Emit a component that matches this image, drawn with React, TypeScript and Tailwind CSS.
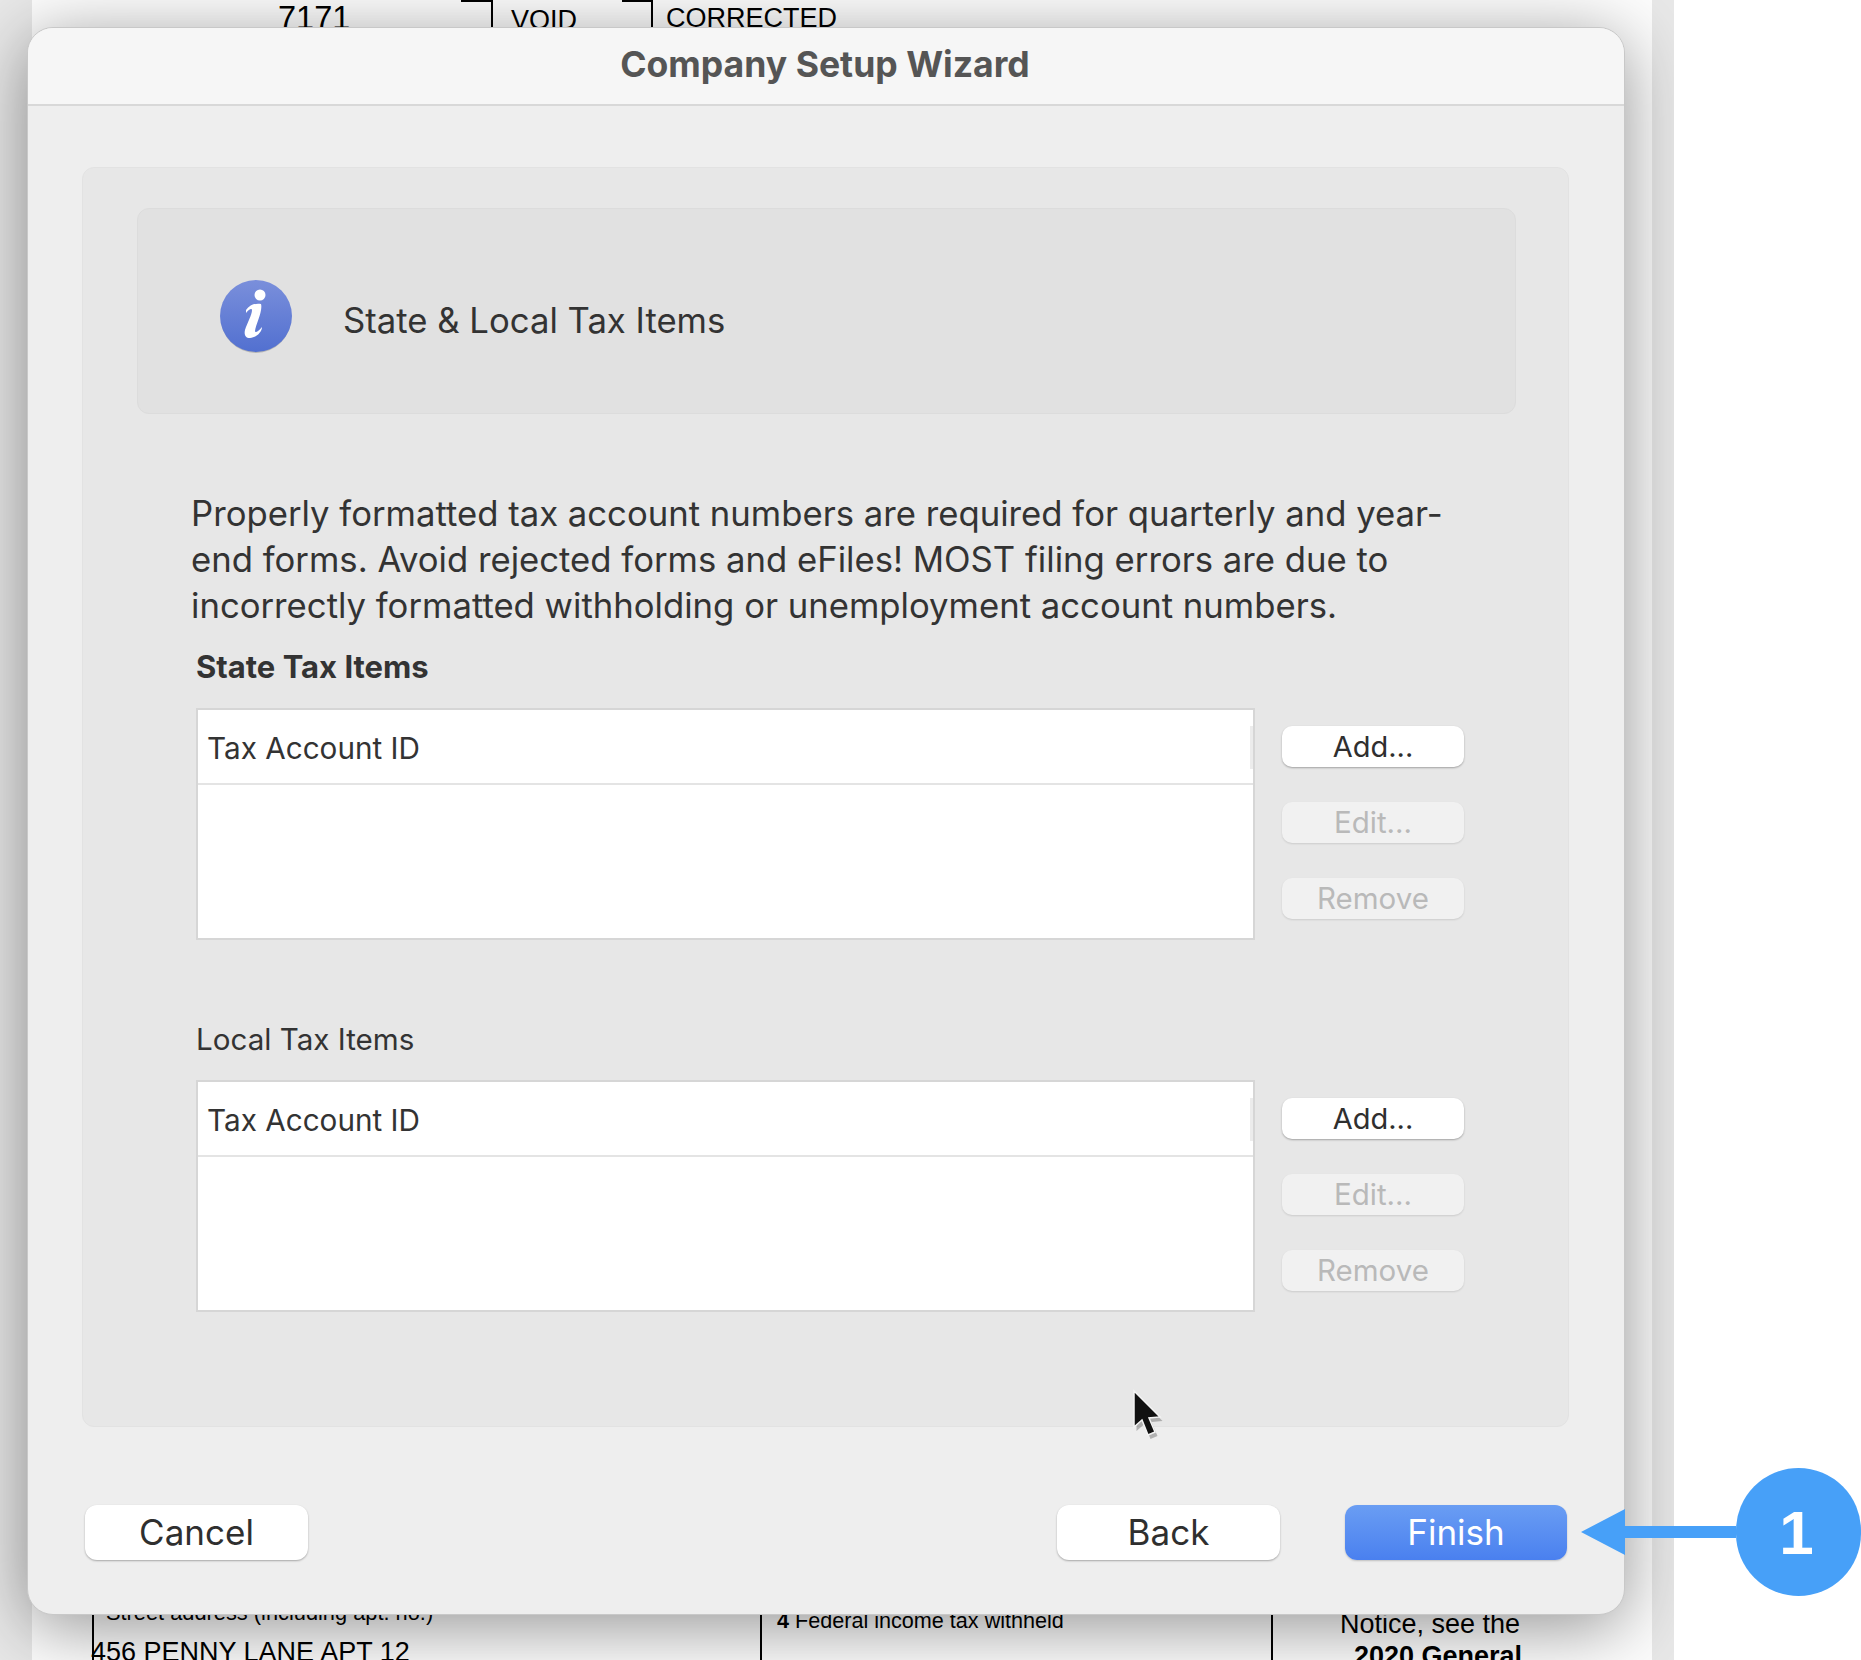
const sans = "font-['Inter','Noto_Sans',sans-serif]";

function SideButton({ label, disabled }: { label: string; disabled?: boolean }) {
  return (
    <button
      className={
        disabled
          ? "h-[41px] w-[182px] rounded-[10px] bg-[#f1f1f1] text-[29.5px] leading-none text-[#b9b9b9] shadow-[0_1px_2px_rgba(0,0,0,0.12)]"
          : "h-[41px] w-[182px] rounded-[10px] bg-white text-[29px] leading-none text-[#2f2f2f] shadow-[0_1px_2px_rgba(0,0,0,0.3)]"
      }
    >
      {label}
    </button>
  );
}

function TaxSection({ title, bold }: { title: string; bold?: boolean }) {
  return (
    <section>
      <h3 className={bold ? "-mt-[1px] h-[58px] text-[31px] leading-[34px] font-bold text-[#333]" : "-mt-[1px] h-[58px] text-[29.6px] leading-[34px] text-[#333]"}>
        {title}
      </h3>
      <div className="flex items-start">
        <div className="h-[232px] w-[1059px] border-[2px] border-[#d6d6d6] bg-white">
          <div className="relative flex h-[75px] items-center border-b-[2px] border-[#e4e4e4] pt-[4px] pl-[9px] text-[29.7px] text-[#333]">
            Tax Account ID
            <span className="absolute top-[16px] right-0 h-[43px] w-[3px] bg-[#ececec]" />
          </div>
        </div>
        <div className="mt-[18px] ml-[27px] flex flex-col gap-[35px]">
          <SideButton label="Add..." />
          <SideButton label="Edit..." disabled />
          <SideButton label="Remove" disabled />
        </div>
      </div>
    </section>
  );
}

function DialogButton({ label, primary }: { label: string; primary?: boolean }) {
  return (
    <button
      className={
        primary
          ? "h-[55px] w-[222px] rounded-[12px] bg-linear-to-b from-[#6a9df3] to-[#4a80ef] text-[35px] leading-none text-white shadow-[0_1px_2px_rgba(0,0,0,0.2)]"
          : "h-[55px] w-[223px] rounded-[12px] bg-white text-[35px] leading-none text-[#2f2f2f] shadow-[0_1px_2px_rgba(0,0,0,0.3)]"
      }
    >
      {label}
    </button>
  );
}

function InfoIcon() {
  return (
    <svg width="74" height="76" viewBox="0 0 74 76" className="mt-[10px] shrink-0">
      <defs>
        <linearGradient id="infoFill" x1="0" y1="0" x2="0" y2="1">
          <stop offset="0" stopColor="#7a8fdb" />
          <stop offset="1" stopColor="#5270d0" />
        </linearGradient>
      </defs>
      <ellipse cx="37" cy="40" rx="35" ry="35" fill="#000" opacity="0.2" />
      <ellipse cx="37" cy="38" rx="36" ry="36" fill="url(#infoFill)" />
      <circle cx="41" cy="17" r="5.5" fill="#fff" />
      <path
        d="M27 32 C31 26 38 25 42 26 C44 33 37 46 36 53 C36 55 39 54 43 49 C43 54 37 60 31 60 C26 60 25 56 26 52 C28 45 33 37 33 32 C33 30 30 31 27 35 Z"
        fill="#fff"
      />
    </svg>
  );
}

// the form lying behind the dialog: only its top and bottom edges show
function BackgroundForm() {
  return (
    <div className="ml-[32px] flex h-[1660px] w-[1620px] flex-col justify-between bg-[#fdfdfd] font-['Liberation_Sans',sans-serif] text-black">
      <div className="flex items-start pl-[246px] whitespace-nowrap">
        <span className="w-[183px] text-[32.5px] leading-[36px]">7171</span>
        <span className="h-[28px] w-[32px] border-t-[2px] border-r-[2px] border-black" />
        <span className="mt-[2px] ml-[18px] w-[111px] text-[27px] leading-[36px]">VOID</span>
        <span className="h-[28px] w-[31px] border-t-[2px] border-r-[2px] border-black" />
        <span className="ml-[13px] text-[27px] leading-[36px]">CORRECTED</span>
      </div>

      <div className="flex h-[62px] pl-[60px] whitespace-nowrap">
        <div className="flex w-[668px] flex-col border-l-[2px] border-black pt-[2px]">
          <span className="ml-[12px] text-[21.8px] leading-[26px]">Street address (including apt. no.)</span>
          <span className="mt-[9px] -ml-[3px] text-[27px] leading-[34px]">456 PENNY LANE APT 12</span>
        </div>
        <div className="w-[511px] border-l-[2px] border-black pt-[10px] pl-[15px] text-[21.6px] leading-[26px]">
          <b>4</b> Federal income tax withheld
        </div>
        <div className="flex flex-1 flex-col border-l-[2px] border-black pt-[10px] text-[27px] leading-[32px]">
          <span className="ml-[67px]">Notice, see the</span>
          <b className="ml-[81px]">2020 General</b>
        </div>
      </div>
    </div>
  );
}

export default function App() {
  return (
    <div className="relative h-[1660px] w-[1861px] overflow-hidden bg-white">
      {/* window behind the dialog, clipped so the shadow stops at its edge */}
      <div className="relative h-[1660px] w-[1674px] overflow-hidden bg-[#e8e8e8]">
        <BackgroundForm />

        <div className={`absolute top-[27px] left-[27px] h-[1588px] w-[1598px] overflow-hidden rounded-[26px] border border-[#c8c8c8] bg-[#eeeeee] shadow-[0_12px_70px_rgba(0,0,0,0.42)] ${sans}`}>
          <header className="flex h-[78px] items-center justify-center border-b-[2px] border-[#d8d8d8] bg-[#f6f6f6] pr-[2px] pb-[2px] text-[35.6px] font-bold text-[#555]">
            Company Setup Wizard
          </header>

          <div className="mt-[61px] mr-[55px] ml-[54px] h-[1260px] rounded-[12px] border border-[#e2e2e2] bg-[#e7e7e7] pt-[40px]">
            <div className="mr-[52px] ml-[54px] flex h-[206px] items-center rounded-[12px] border border-[#dcdcdc] bg-[#e1e1e1] pl-[81px]">
              <InfoIcon />
              <span className="mt-[18px] ml-[50px] text-[34.7px] text-[#333]">State &amp; Local Tax Items</span>
            </div>

            <p className="mt-[76px] ml-[108px] w-[1300px] text-[34.7px] leading-[46px] text-[#333]">
              Properly formatted tax account numbers are required for quarterly and year-
              <br />
              end forms. Avoid rejected forms and eFiles! MOST filing errors are due to
              <br />
              incorrectly formatted withholding or unemployment account numbers.
            </p>

            <div className="mt-[23px] ml-[113px] flex flex-col gap-[83px]">
              <TaxSection title="State Tax Items" bold />
              <TaxSection title="Local Tax Items" />
            </div>
          </div>

          <footer className="mt-[78px] flex items-center pr-[57px] pl-[57px]">
            <DialogButton label="Cancel" />
            <div className="ml-auto flex gap-[65px]">
              <DialogButton label="Back" />
              <DialogButton label="Finish" primary />
            </div>
          </footer>
        </div>
      </div>

      {/* mouse pointer */}
      <svg width="36" height="56" viewBox="0 0 36 54" className="absolute top-[1388px] left-[1131px]">
        <path d="M4 3 L4 39 L12 32 L18 47 L25 44 L19 30 L30 29 Z" fill="#000" opacity="0.25" transform="translate(1.5 3)" />
        <path d="M3 2 L3 38 L11 31 L17 46 L24 43 L18 29 L29 28 Z" fill="#111" stroke="#f4f4f4" strokeWidth="1.5" />
      </svg>

      {/* numbered callout */}
      <div className="absolute top-[1468px] left-[1581px] flex h-[128px] w-[280px] items-center">
        <svg width="155" height="46" viewBox="0 0 155 46" className="shrink-0">
          <path d="M0 23 L44 0 L44 17 L155 17 L155 29 L44 29 L44 46 Z" fill="#47a0f8" />
        </svg>
        <span className="flex h-[128px] w-[125px] shrink-0 items-center justify-center rounded-full bg-[#47a0f8] pr-[4px] font-['Liberation_Sans',sans-serif] text-[62px] font-bold text-white">
          1
        </span>
      </div>
    </div>
  );
}
